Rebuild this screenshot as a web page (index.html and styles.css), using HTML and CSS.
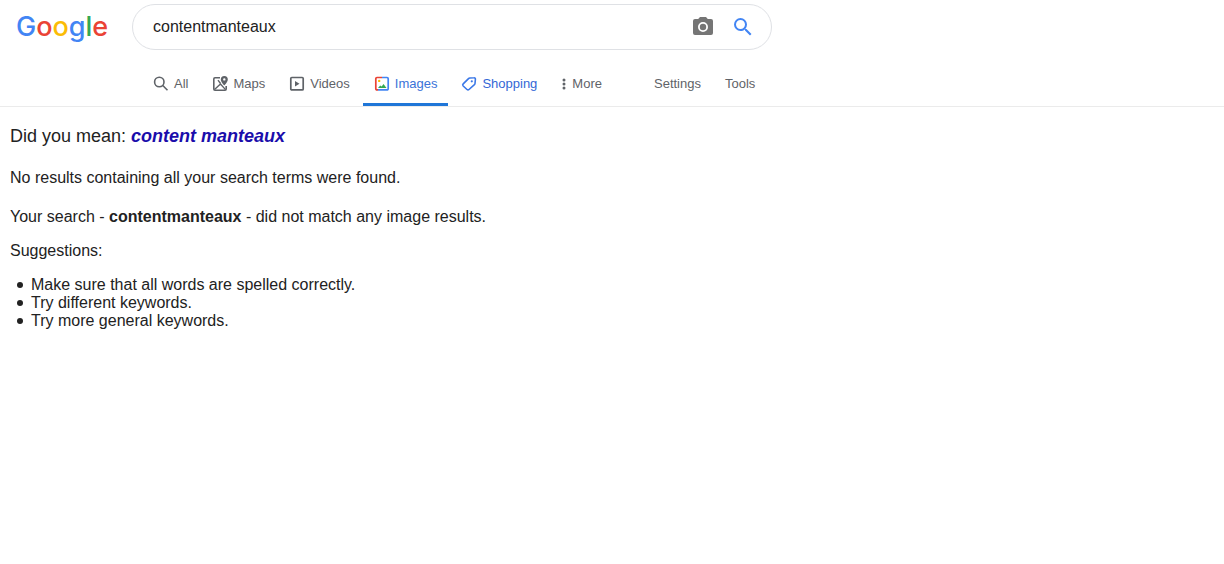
FILE: index.html
```html
<!DOCTYPE html>
<html lang="en">
  <head>
    <meta charset="UTF-8">
    <meta name="viewport" content="width=device-width, initial-scale=1.0">
    <title>contentmanteaux - Google Search</title>
    <link rel="stylesheet" href="styles.css">
  </head>
  <body>
    <header>
      <div class="top">
        <a class="logo" href="/" aria-label="Google"><span class="blue">G</span><span class="red">o</span><span class="yellow">o</span><span class="blue">g</span><span class="green">l</span><span class="red">e</span></a>
        <form class="search-box" action="/search">
          <input type="text" name="q" value="contentmanteaux" aria-label="Search">
          <button type="button" aria-label="Search by image">
            <svg width="24" height="24" viewBox="0 0 24 24" fill="#757575">
              <path fill-rule="evenodd" d="M9 2 7.200 4H4a2 2 0 0 0-2 2v12a2 2 0 0 0 2 2h16a2 2 0 0 0 2-2V6a2 2 0 0 0-2-2h-3.200L15 2zM12 7a5 5 0 1 1 0 10a5 5 0 1 1 0-10z"/>
              <circle cx="12" cy="12" r="3.200"/>
            </svg>
          </button>
          <button type="submit" aria-label="Google Search">
            <svg width="24" height="24" viewBox="0 0 24 24" fill="#4285f4">
              <path d="M15.500 14h-.79l-.28-.27A6.470 6.470 0 0 0 16 9.500 6.500 6.500 0 1 0 9.500 16c1.610 0 3.090-.59 4.230-1.570l.27.28v.79l5 4.990L20.490 19l-4.990-5zm-6 0C7.010 14 5 11.990 5 9.500S7.010 5 9.500 5 14 7.010 14 9.500 11.990 14 9.500 14z"/>
            </svg>
          </button>
        </form>
      </div>

      <nav class="tabs">
        <a href="#all">
          <svg width="16" height="16" viewBox="0 0 16 16" fill="none" stroke="#5f6368" stroke-width="1.600">
            <circle cx="6.300" cy="6" r="4.700"/>
            <path d="M9.800 9.500l4.700 4.700"/>
          </svg>
          All
        </a>
        <a href="#maps">
          <svg width="16" height="16" viewBox="0 0 16 16" fill="none" stroke="#5f6368" stroke-width="1.600">
            <path d="M8 1.800H3A1.200 1.200 0 0 0 1.800 3v10A1.200 1.200 0 0 0 3 14.200h10a1.200 1.200 0 0 0 1.200-1.200v-3"/>
            <path stroke-width="1.400" d="M2.500 13.600l6-5.600 5 5.600M6 4.200l2.500 3.300"/>
            <path fill="#5f6368" fill-rule="evenodd" stroke="none" d="M12.300 0a3.500 3.500 0 0 0-3.500 3.500c0 2.400 3.500 6 3.500 6s3.500-3.600 3.500-6A3.500 3.500 0 0 0 12.300 0zm0 2.200a1.200 1.200 0 1 1 0 2.400a1.200 1.200 0 1 1 0-2.400z"/>
          </svg>
          Maps
        </a>
        <a href="#videos">
          <svg width="16" height="16" viewBox="0 0 16 16">
            <rect x="1.800" y="1.500" width="12.400" height="12.400" rx="1" fill="none" stroke="#5f6368" stroke-width="1.700"/>
            <path d="M6 5v5.600l4.500-2.800z" fill="#5f6368"/>
          </svg>
          Videos
        </a>
        <a class="active" href="#images" aria-current="page">
          <svg width="16" height="16" viewBox="0 0 16 16" fill="none" stroke-width="1.700">
            <path stroke="#ea4335" d="M8 1.500H3A1.200 1.200 0 0 0 1.800 2.700v10A1.200 1.200 0 0 0 3 13.900h1"/>
            <path stroke="#4285f4" d="M8 1.500h5A1.200 1.200 0 0 1 14.200 2.700v10a1.200 1.200 0 0 1-1.200 1.200H4"/>
            <circle cx="5.200" cy="4.900" r="1.200" fill="#fbbc04"/>
            <path fill="#34a853" d="M4 12l2.200-2.500 1.500 1L9.500 8l3 4z"/>
          </svg>
          Images
        </a>
        <a class="link-blue" href="#shopping">
          <svg width="16" height="16" viewBox="0 0 16 16" fill="none" stroke="#3b78e7" stroke-width="1.600" stroke-linejoin="round">
            <path d="M8.800 2l4.200-.2a1.300 1.300 0 0 1 1.400 1.400l-.4 4.300a2 2 0 0 1-.6 1.200L8 13.500a1.500 1.500 0 0 1-2 0L2.200 10a1.500 1.500 0 0 1 0-2.100L7.500 2.600A2 2 0 0 1 8.800 2z"/>
            <circle cx="10.800" cy="5.300" r="1.100" fill="#3b78e7" stroke="none"/>
          </svg>
          Shopping
        </a>
        <a href="#more">
          <svg width="6" height="16" viewBox="0 0 6 16" fill="#5f6368">
            <circle cx="3" cy="4" r="1.500"/>
            <circle cx="3" cy="8" r="1.500"/>
            <circle cx="3" cy="12" r="1.500"/>
          </svg>
          More
        </a>
        <a class="settings" href="#settings">Settings</a>
        <a href="#tools">Tools</a>
      </nav>
    </header>

    <main>
      <p class="did-you-mean">Did you mean: <a href="#content-manteaux">content manteaux</a></p>
      <p class="no-results">No results containing all your search terms were found.</p>
      <p>Your search - <b>contentmanteaux</b> - did not match any image results.</p>
      <p>Suggestions:</p>
      <ul>
        <li>Make sure that all words are spelled correctly.</li>
        <li>Try different keywords.</li>
        <li>Try more general keywords.</li>
      </ul>
    </main>
  </body>
</html>
```

FILE: styles.css
```css
body {
  margin: 0;
  font-family: "Liberation Sans", Arial, sans-serif;
  font-size: 16px;
  line-height: 18px;
  color: #222;
  background-color: #fff;
}

header {
  border-bottom: 1px solid #ebebeb;
}

.top {
  display: flex;
  align-items: center;
  padding: 4px 16px 0;
}

.logo {
  width: 116px;
  font-family: Inter, sans-serif;
  font-size: 27px;
  font-weight: 500;
  line-height: 46px;
  text-decoration: none;
}

.blue {
  color: #4285f4;
}

.red {
  color: #ea4335;
}

.yellow {
  color: #fbbc05;
}

.green {
  color: #34a853;
}

.search-box {
  display: flex;
  align-items: center;
  flex: 1;
  max-width: 640px;
  box-sizing: border-box;
  height: 46px;
  padding: 0 16px 0 20px;
  border: 1px solid #dfe1e5;
  border-radius: 24px;
}

.search-box input {
  flex: 1;
  min-width: 0;
  padding: 0;
  border: none;
  outline: none;
  font: inherit;
  color: #222;
}

.search-box button {
  display: flex;
  padding: 0;
  margin-left: 16px;
  border: none;
  background: none;
  cursor: pointer;
}

.tabs {
  display: flex;
  gap: 2px;
  padding: 14px 0 0 142px;
  font-size: 13px;
}

.tabs a {
  display: flex;
  align-items: center;
  gap: 5px;
  height: 39px;
  padding: 0 11px;
  border-bottom: 3px solid transparent;
  color: #5f6368;
  text-decoration: none;
}

.tabs .active {
  border-bottom-color: #1f76d8;
  color: #3b73d9;
}

.tabs .link-blue {
  color: #3367d6;
}

.tabs .settings {
  margin-left: 28px;
}

main {
  padding: 20px 10px;
}

main p {
  margin: 0 0 16px;
}

main .did-you-mean {
  margin-bottom: 24px;
  font-size: 18px;
}

.did-you-mean a {
  color: #1a0dab;
  font-style: italic;
  font-weight: bold;
  text-decoration: none;
}

main .no-results {
  margin-bottom: 21px;
}

main ul {
  margin: 0;
  padding-left: 7px;
  list-style: none;
}

main li {
  display: flex;
  align-items: center;
  gap: 8px;
}

main li::before {
  content: "";
  width: 6px;
  height: 6px;
  border-radius: 50%;
  background-color: #222;
}
```
